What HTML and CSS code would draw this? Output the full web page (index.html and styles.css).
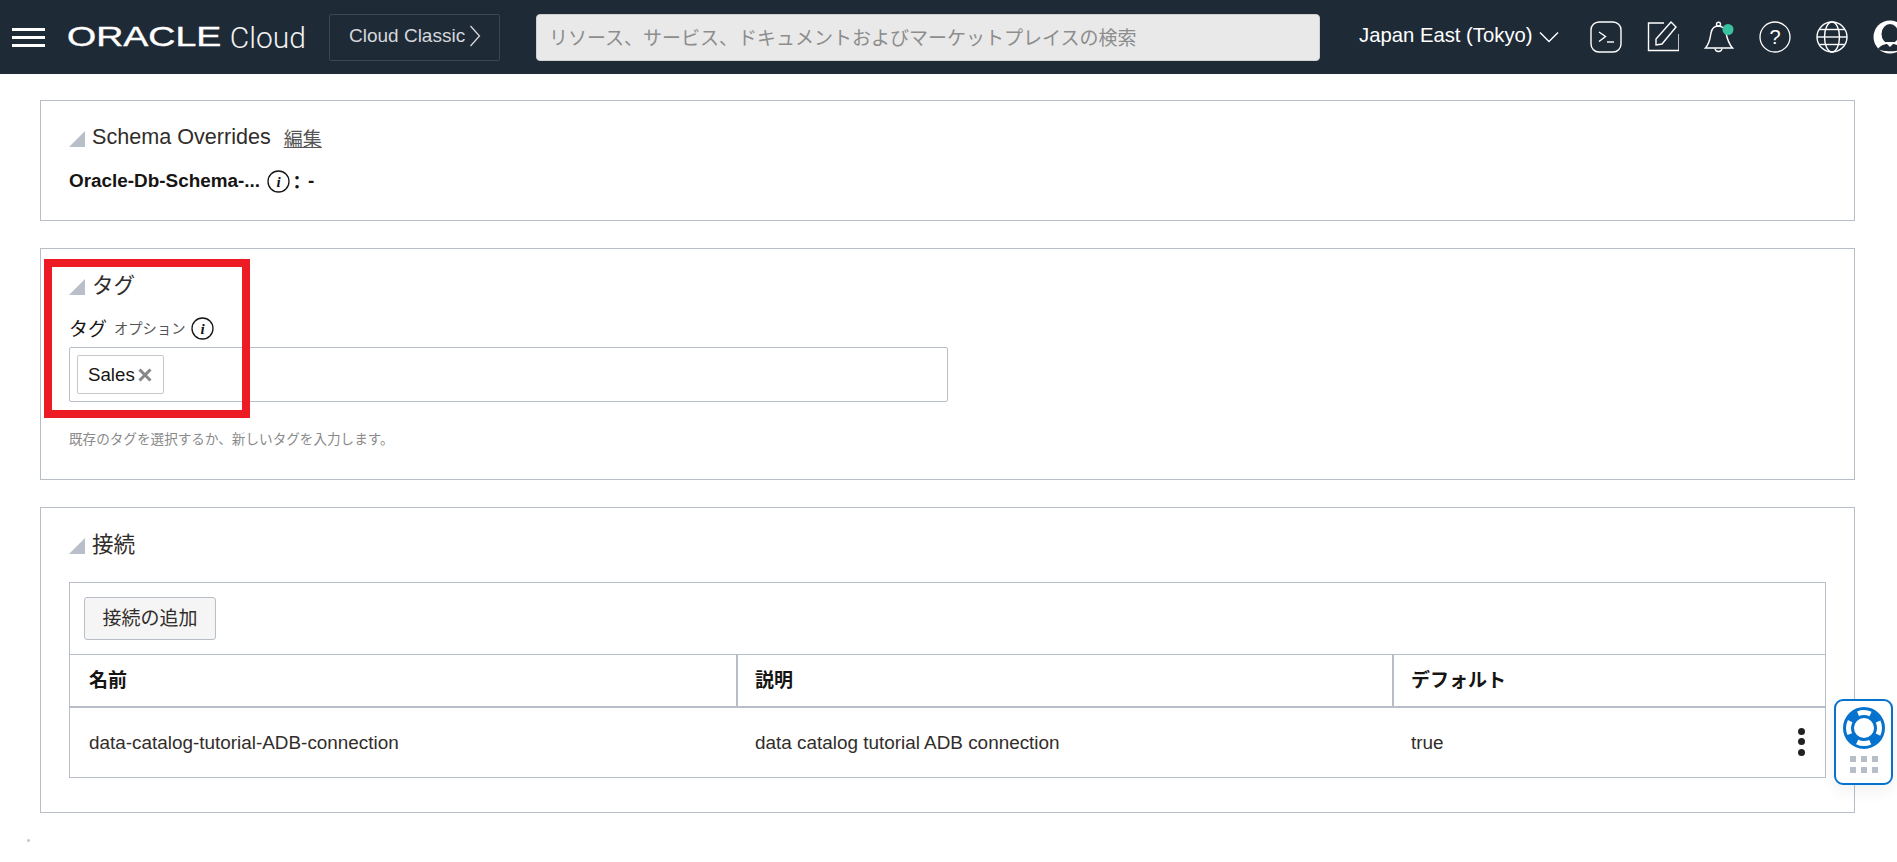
FILE: index.html
```html
<!DOCTYPE html>
<html lang="ja">
<head>
<meta charset="utf-8">
<title>Data Catalog</title>
<link rel="stylesheet" href="styles.css">
</head>
<body>
<header class="topbar">
  <div class="hamburger"><span></span><span></span><span></span></div>
  <div class="brand"><span class="wordmark">ORACLE</span><span class="cloud">Cloud</span></div>
  <div class="classic">Cloud Classic
    <svg class="classic-chev" viewBox="0 0 12 24" width="12" height="24"><path d="M1.5 2 L10.5 12 L1.5 22" fill="none" stroke="#d5d8dc" stroke-width="1.3"/></svg>
  </div>
  <div class="search">リソース、サービス、ドキュメントおよびマーケットプレイスの検索</div>
  <div class="region">Japan East (Tokyo)
    <svg class="region-chev" viewBox="0 0 20 12" width="20" height="12"><path d="M1 1.5 L10 10.5 L19 1.5" fill="none" stroke="#fff" stroke-width="1.4"/></svg>
  </div>
  <div class="icons">
    <svg width="32" height="32" viewBox="0 0 32 32" fill="none" stroke="#fff" stroke-width="1.4"><rect x="1" y="1" width="30" height="30" rx="8"/><path d="M9 11 L15.5 15.5 L9 20.5"/><path d="M17 21 H24"/></svg>
    <svg width="32" height="32" viewBox="0 0 32 32" fill="none" stroke="#fff" stroke-width="1.4"><path d="M17 2 H1.5 V29.5 H32 V13"/><path d="M9 21 L9 27 L15 26 L29 9 L24 4 Z" transform="translate(0 -3)"/></svg>
    <svg width="30" height="32" viewBox="0 0 30 32" fill="none" stroke="#fff" stroke-width="1.4"><path d="M1.5 27 C6 22 6 17 7 12 C8 7 11 5 14 5 C18 5 21 7 22 12 C23 17 24 22 28.5 27 Z"/><path d="M11 27.5 C11.5 31.5 17.5 31.5 18 27.5"/><circle cx="14.5" cy="3.2" r="2"/><circle cx="24" cy="8.5" r="5.5" fill="#3ac2a0" stroke="none"/></svg>
    <svg width="32" height="32" viewBox="0 0 32 32" fill="none" stroke="#fff" stroke-width="1.3"><circle cx="16" cy="16" r="15"/><text x="16" y="22.5" class="help-mark">?</text></svg>
    <svg width="32" height="32" viewBox="0 0 32 32" fill="none" stroke="#fff" stroke-width="1.4"><circle cx="16" cy="16" r="15"/><ellipse cx="16" cy="16" rx="7.5" ry="15"/><path d="M1 16 H31"/><path d="M3.5 8.5 H28.5"/><path d="M3.5 23.5 H28.5"/></svg>
    <svg class="avatar" width="34" height="34" viewBox="0 0 34 34"><circle cx="17" cy="17" r="16.5" fill="#fff"/><ellipse cx="17" cy="14" rx="8.5" ry="10" fill="#1f2a37"/><path d="M5 29 C9 22 25 22 29 29 C25 32 9 32 5 29 Z" fill="#1f2a37"/><path d="M12 22 L17 27 L22 22 Z" fill="#fff"/></svg>
  </div>
</header>

<main class="content">
  <section class="panel panel-schema">
    <h2 class="panel-title"><span class="tri"></span>Schema Overrides<a class="edit">編集</a></h2>
    <div class="kv"><b>Oracle-Db-Schema-...</b>
      <svg class="info" width="23" height="23" viewBox="0 0 23 23"><circle cx="11.5" cy="11.5" r="10.5" fill="none" stroke="#161513" stroke-width="1.3"/><text x="11.5" y="16.5" class="info-mark">i</text></svg>
      <span class="kv-colon">：</span><b class="kv-val">-</b>
    </div>
  </section>

  <section class="panel panel-tags">
    <h2 class="panel-title panel-title-cjk"><span class="tri"></span>タグ</h2>
    <div class="field-label">タグ<small>オプション</small>
      <svg class="info" width="23" height="23" viewBox="0 0 23 23"><circle cx="11.5" cy="11.5" r="10.5" fill="none" stroke="#161513" stroke-width="1.3"/><text x="11.5" y="16.5" class="info-mark">i</text></svg>
    </div>
    <div class="tag-input">
      <span class="chip">Sales<svg width="14" height="14" viewBox="0 0 14 14"><path d="M1.5 1.5 L12.5 12.5 M12.5 1.5 L1.5 12.5" stroke="#888" stroke-width="3"/></svg></span>
    </div>
    <p class="hint">既存のタグを選択するか、新しいタグを入力します。</p>
  </section>

  <section class="panel panel-conn">
    <h2 class="panel-title panel-title-cjk"><span class="tri"></span>接続</h2>
    <div class="table-box">
      <div class="toolbar"><button class="btn">接続の追加</button></div>
      <div class="row row-head">
        <div class="cell">名前</div>
        <div class="cell">説明</div>
        <div class="cell">デフォルト</div>
      </div>
      <div class="row row-body">
        <div class="cell">data-catalog-tutorial-ADB-connection</div>
        <div class="cell">data catalog tutorial ADB connection</div>
        <div class="cell cell-last">true<span class="kebab"><i></i><i></i><i></i></span></div>
      </div>
    </div>
  </section>
</main>

<span class="speck"></span>

<aside class="help-widget">
  <svg width="44" height="44" viewBox="0 0 44 44">
    <circle cx="22" cy="22" r="15.5" fill="none" stroke="#0572ce" stroke-width="11"/>
    <circle cx="22" cy="22" r="15.5" fill="none" stroke="#fff" stroke-width="5" stroke-dasharray="13.5 10.85" stroke-dashoffset="6.75" transform="rotate(-90 22 22)"/>
  </svg>
  <div class="dots"><i></i><i></i><i></i><i></i><i></i><i></i></div>
</aside>

<div class="annot"></div>
</body>
</html>
```
FILE: styles.css
```css
* { box-sizing: border-box; }
html, body { margin: 0; height: 100%; overflow: hidden; background: #fff; }
body { font-family: "Liberation Sans", "Noto Sans CJK JP", sans-serif; color: #161513; position: relative; }

.topbar { height: 74px; background: #1f2a37; display: flex; align-items: center; overflow: hidden; }
.topbar > * { flex: none; }
.hamburger { margin-left: 12px; width: 33px; display: flex; flex-direction: column; gap: 5px; }
.hamburger span { display: block; height: 3px; background: #fff; }
.brand { margin-left: 22px; width: 239px; display: flex; align-items: center; color: #fff; }
.wordmark { display: inline-block; width: 165px; font-size: 28px; letter-spacing: 0; transform: scaleX(1.34); transform-origin: left center; -webkit-text-stroke: 0.4px #fff; }
.cloud { font-family: Roboto, "Liberation Sans", sans-serif; font-weight: 300; font-size: 30px; color: #f2f2f2; }
.classic { margin-left: 23px; width: 171px; height: 47px; border: 1px solid #3b4654; border-radius: 2px; display: flex; align-items: center; padding: 0 0 2px 19px; gap: 4px; font-size: 19px; color: #d5d8dc; white-space: nowrap; }
.classic-chev { flex: none; }
.search { margin-left: 36px; width: 784px; height: 47px; background: #e9e9e9; border: 1px solid #d0d0d0; border-radius: 4px; display: flex; align-items: center; padding: 0 0 2px 12px; font-size: 19px; color: #8d8d8d; white-space: nowrap; }
.region { margin-left: 39px; display: flex; align-items: center; gap: 6px; color: #fff; font-size: 20.3px; white-space: nowrap; width: 200px; padding-bottom: 3px; }
.region-chev { flex: none; margin-top: 3px; }
.icons { display: flex; align-items: center; gap: 25px; margin-left: 31px; }
.icons svg { flex: none; display: block; }
.help-mark { font-family: "Liberation Sans", sans-serif; font-size: 20px; fill: #fff; stroke: none; text-anchor: middle; }

.content { padding: 26px 42px 0 40px; display: flex; flex-direction: column; gap: 27px; }
.panel { border: 1px solid #b8bec8; padding: 21px 28px 0; }
.panel-schema { height: 121px; }
.panel-tags { height: 232px; }
.panel-conn { height: 306px; }
.panel-title { margin: 0; height: 30px; display: flex; align-items: center; font-weight: 400; font-size: 21.6px; color: #312d2a; white-space: nowrap; }
.panel-title-cjk { padding-bottom: 3px; }
.tri { width: 0; height: 0; border-style: solid; border-width: 0 0 16px 16px; border-color: transparent transparent #b8bfc9 transparent; margin-right: 7px; margin-top: 3px; flex: none; }
.panel-title-cjk .tri { margin-top: 6px; }
.edit { margin-left: 13px; font-size: 19px; color: #555; text-decoration: underline; }

.kv { margin-top: 17px; height: 24px; display: flex; align-items: center; font-size: 18.9px; color: #161513; white-space: nowrap; }
.info { flex: none; display: block; }
.kv .info { margin-left: 7px; }
.kv-colon { font-size: 18px; font-weight: 700; margin-left: -2px; width: 19px; }
.kv-val { margin-left: 1px; }
.info-mark { font-family: "Liberation Serif", serif; font-style: italic; font-weight: 700; font-size: 15px; fill: #161513; text-anchor: middle; }

.field-label { margin-top: 16px; height: 24px; display: flex; align-items: center; font-size: 19px; white-space: nowrap; padding-bottom: 2px; }
.field-label small { font-size: 14.3px; color: #555; margin-left: 7px; }
.field-label .info { margin: 2px 0 0 5px; }
.tag-input { margin-top: 7px; width: 879px; height: 55px; border: 1px solid #b8bec8; border-radius: 2px; padding: 7px; display: flex; align-items: flex-start; }
.chip { height: 39px; width: 87px; border: 1px solid #c9c9c9; border-radius: 2px; display: flex; align-items: center; gap: 3px; padding-left: 10px; font-size: 18.7px; color: #161513; }
.hint { margin: 29px 0 0; font-size: 13.6px; line-height: 18px; color: #8a8a8a; }

.table-box { margin-top: 23px; border: 1px solid #b8bec8; height: 196px; }
.toolbar { height: 72px; border-bottom: 1px solid #b8bec8; padding: 14px 14px 0; }
.btn { height: 43px; width: 132px; padding: 0 0 5px; background: #f5f5f5; border: 1px solid #b8bec8; border-radius: 3px; font-family: inherit; font-size: 19px; color: #312d2a; }
.row { display: grid; grid-template-columns: 666px 656px 1fr; }
.row-head { height: 53px; border-bottom: 2px solid #b8bec8; font-weight: 700; font-size: 19px; color: #161513; }
.row-head .cell { display: flex; align-items: center; padding: 0 0 5px 19px; }
.row-head .cell + .cell { border-left: 2px solid #b8bec8; padding-left: 17px; }
.row-body { height: 69px; font-size: 18.9px; color: #312d2a; }
.row-body .cell { display: flex; align-items: center; padding-left: 19px; }
.row-body .cell-last { justify-content: space-between; padding-right: 20px; }
.kebab { display: flex; flex-direction: column; gap: 3.5px; margin-top: -2px; }
.kebab i { display: block; width: 7px; height: 7px; border-radius: 50%; background: #222; }

.speck { position: absolute; left: 27px; top: 839px; width: 3px; height: 3px; background: #c4c6cc; border-radius: 50%; }
.help-widget { position: absolute; left: 1834px; top: 699px; width: 59px; height: 86px; background: #fff; border: 2px solid #0572ce; border-radius: 9px; display: flex; flex-direction: column; align-items: center; padding-top: 5px; box-shadow: 0 6px 16px rgba(0,0,0,.06); }
.dots { margin-top: 6px; display: grid; grid-template-columns: repeat(3, 6px); gap: 5px; }
.dots i { display: block; width: 6px; height: 6px; background: #b8bec8; }
.annot { position: absolute; left: 44px; top: 259px; width: 206px; height: 159px; border: 8px solid #ed1c24; }
```
